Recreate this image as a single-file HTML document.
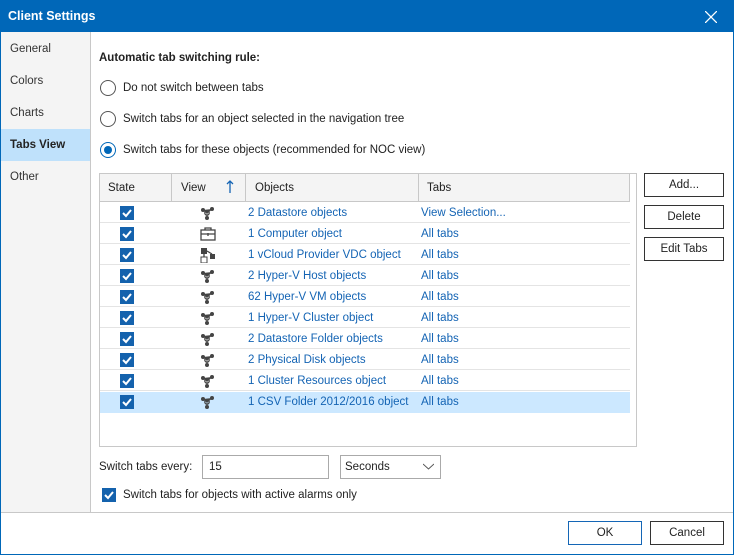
<!DOCTYPE html>
<html><head><style>
*{box-sizing:border-box;margin:0;padding:0}
body{width:734px;height:555px;position:relative;overflow:hidden;background:#fff;font-family:"Liberation Sans",sans-serif;font-size:11.5px;color:#222}
.a{position:absolute}
.win{left:0;top:0;width:734px;height:555px;border:1px solid #0067b8;border-top:none}
.title{left:0;top:0;width:734px;height:32px;background:#0067b8;color:#fff;font-weight:bold;font-size:12.5px;padding:9px 0 0 8px}
.nav{left:1px;top:32px;width:90px;height:481px;background:#f4f4f4;border-right:1px solid #c8c8c8}
.nav div{position:absolute;left:0;width:89px;height:32px;padding:10px 0 0 9px;color:#333}
.radio{width:16px;height:16px;border:1px solid #555;border-radius:50%}
.radio.on::after{content:"";position:absolute;left:3px;top:3px;width:8px;height:8px;border-radius:50%;background:#0067b8}
.radio.on{border-color:#0067b8}
.cb{width:14px;height:14px;background:#1462ad}
.btn{border:1px solid #333;background:#fff;text-align:center;padding-top:5px;color:#222}
.lnk{color:#1464b4}
.row{left:100px;width:530px;height:21px;border-bottom:1px solid #e4e4e4}
</style></head><body>
<div class="a win"></div>
<div class="a title">Client Settings</div>
<svg class="a" style="left:705px;top:11px" width="12" height="12"><path d="M0 0L12 12M12 0L0 12" stroke="#fff" stroke-width="1.3"/></svg>
<div class="a nav">
<div style="top:1px">General</div>
<div style="top:33px">Colors</div>
<div style="top:65px">Charts</div>
<div style="top:97px;background:#bfe1fb;font-weight:bold;color:#222">Tabs View</div>
<div style="top:129px">Other</div>
</div>
<div class="a" style="left:1px;top:512px;width:732px;height:1px;background:#c8c8c8"></div>

<div class="a" style="left:99px;top:52px;font-weight:bold">Automatic tab switching rule:</div>
<div class="a radio" style="left:100px;top:80px"></div><div class="a" style="left:123px;top:82px">Do not switch between tabs</div>
<div class="a radio" style="left:100px;top:111px"></div><div class="a" style="left:123px;top:113px">Switch tabs for an object selected in the navigation tree</div>
<div class="a radio on" style="left:100px;top:142px"></div><div class="a" style="left:123px;top:144px">Switch tabs for these objects (recommended for NOC view)</div>

<div class="a" style="left:99px;top:173px;width:538px;height:274px;border:1px solid #c8c8c8"></div>
<div class="a" style="left:100px;top:174px;width:530px;height:28px;background:#f4f4f4;border-bottom:1px solid #c8c8c8;border-right:1px solid #c8c8c8"></div>
<div class="a" style="left:171px;top:174px;width:1px;height:28px;background:#c8c8c8"></div>
<div class="a" style="left:245px;top:174px;width:1px;height:28px;background:#c8c8c8"></div>
<div class="a" style="left:418px;top:174px;width:1px;height:28px;background:#c8c8c8"></div>
<div class="a" style="left:108px;top:182px">State</div>
<div class="a" style="left:181px;top:182px">View</div>
<svg class="a" style="left:226px;top:180px" width="8" height="13"><path d="M4 1V13M1 4L4 1L7 4" stroke="#1464b4" stroke-width="1.3" fill="none"/></svg>
<div class="a" style="left:255px;top:182px">Objects</div>
<div class="a" style="left:427px;top:182px">Tabs</div>

<div class="a row" style="top:392px;background:#cce8ff;border-bottom:none"></div>
<div id="rows"></div>
<script>
var d=[["2 Datastore objects","View Selection...",0],["1 Computer object","All tabs",1],["1 vCloud Provider VDC object","All tabs",2],["2 Hyper-V Host objects","All tabs",0],["62 Hyper-V VM objects","All tabs",0],["1 Hyper-V Cluster object","All tabs",0],["2 Datastore Folder objects","All tabs",0],["2 Physical Disk objects","All tabs",0],["1 Cluster Resources object","All tabs",0],["1 CSV Folder 2012/2016 object","All tabs",0]];
var icons=['<circle cx="3" cy="5" r="2"/><circle cx="12" cy="4" r="2"/><circle cx="7" cy="13" r="2"/><circle cx="7" cy="8" r="2.2" fill="none" stroke="#444" stroke-width="1.3"/><path d="M3 5L7 8L12 4M7 8V13" stroke="#444"/>',
'<rect x="1" y="4" width="14" height="10" fill="none" stroke="#444" stroke-width="1.3"/><path d="M5 4V2H11V4M1 8H15M8 7V10" stroke="#444" stroke-width="1.3" fill="none"/>',
'<rect x="1" y="1" width="6" height="6"/><rect x="10" y="7" width="5" height="5"/><rect x="1" y="10" width="6" height="6" fill="none" stroke="#444"/><path d="M4 7V10M7 4L12 7" stroke="#444" stroke-width="1.3"/>'];
var h="";d.forEach(function(r,i){var y=203+i*21;
h+='<div class="a row" style="top:'+(y-1)+'px;'+(i==9?'border:none':'')+'"></div>';
h+='<div class="a cb" style="left:120px;top:'+(y+3)+'px"><svg width="14" height="14"><path d="M3 7L6 10L11 4" stroke="#fff" stroke-width="2" fill="none"/></svg></div>';
h+='<svg class="a" style="left:200px;top:'+(y+2)+'px" width="16" height="16" fill="#444">'+icons[r[2]]+'</svg>';
h+='<div class="a lnk" style="left:248px;top:'+(y+4)+'px">'+r[0]+'</div><div class="a lnk" style="left:421px;top:'+(y+4)+'px">'+r[1]+'</div>';});
document.getElementById("rows").innerHTML=h;
</script>

<div class="a btn" style="left:644px;top:173px;width:80px;height:24px">Add...</div>
<div class="a btn" style="left:644px;top:205px;width:80px;height:24px">Delete</div>
<div class="a btn" style="left:644px;top:237px;width:80px;height:24px">Edit Tabs</div>

<div class="a" style="left:99px;top:461px">Switch tabs every:</div>
<div class="a" style="left:202px;top:455px;width:127px;height:24px;border:1px solid #aaa;padding:5px 0 0 6px">15</div>
<div class="a" style="left:340px;top:455px;width:101px;height:24px;border:1px solid #aaa;padding:5px 0 0 4px">Seconds</div>
<svg class="a" style="left:423px;top:463px" width="11" height="7"><path d="M0 1L5.5 6L11 1" stroke="#555" fill="none"/></svg>
<div class="a cb" style="left:102px;top:488px"><svg width="14" height="14"><path d="M3 7L6 10L11 4" stroke="#fff" stroke-width="2" fill="none"/></svg></div>
<div class="a" style="left:123px;top:489px">Switch tabs for objects with active alarms only</div>

<div class="a btn" style="left:568px;top:521px;width:74px;height:24px;border-color:#1466b6">OK</div>
<div class="a btn" style="left:650px;top:521px;width:74px;height:24px">Cancel</div>
</body></html>
